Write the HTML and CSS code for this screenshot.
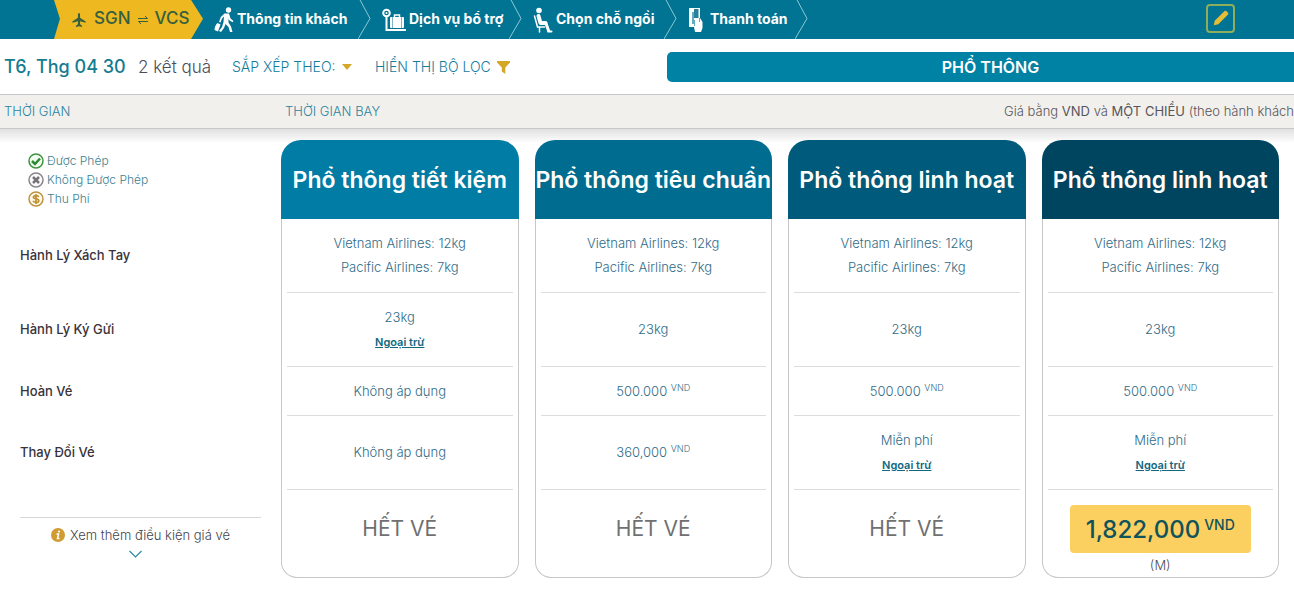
FILE: index.html
```html
<!DOCTYPE html>
<html lang="vi">
<head>
    <meta charset="UTF-8">
    <meta name="viewport" content="width=device-width, initial-scale=1.0">
    <title>SGN - VCS</title>
    <link rel="stylesheet" href="styles.css">
</head>
<body>
    <header class="topbar">
        <ol class="steps">
            <li class="step route">
                <svg width="16" height="16" viewBox="0 0 18 18"><path fill="currentColor" d="M9 1c.8 0 1.200 1 1.200 2v3.600l6.300 4v1.600l-6.300-1.800v3.400l2.300 1.600V17L9 16.100 5.500 17v-1.600l2.300-1.600v-3.400l-6.300 1.800v-1.600l6.300-4V3c0-1 .4-2 1.200-2z"/></svg>
                <span>SGN</span>
                <svg width="10" height="10" viewBox="0 0 10 10"><path fill="none" stroke="currentColor" d="M0 3.500h9.500L7 1M10 6.500H.5L3 9"/></svg>
                <span>VCS</span>
            </li>
            <li class="step">
                <svg width="20" height="26" viewBox="0 0 20 26"><circle cx="14.500" cy="3" r="2.700" fill="#fff"/><path fill="#fff" d="M10.500 6.500h4.500l1.500 5 3 2.500-1 1.300-3.500-2.300-.5-1.500v4l2.500 4 1.500 5.500h-2.500L14.500 20l-3-3-1.500 4-3 4-2-1 3-4 1.500-5 .5-5.500-2 2-1.500 4-1.500-.5L6.800 10z"/><path fill="#fff" d="M3.500 16l3 1.500-2.500 7-3.500-1.500c0-3 1-5 3-7z"/></svg>
                <span>Thông tin khách</span>
                <svg class="arrow" width="13" height="39" viewBox="0 0 13 39"><path d="M1-2l11 20.500L0 39"/></svg>
            </li>
            <li class="step">
                <svg width="24" height="24" viewBox="0 0 24 24"><g fill="none" stroke="#fff"><circle cx="4.500" cy="5" r="3.300" stroke-width="2"/><path stroke-width="2" d="M4.500 8v14H24"/><path stroke-width="1.500" d="M12.500 9V7h5v2"/></g><rect x="8" y="9" width="14" height="11" rx="1" fill="#fff"/><path stroke="#7fb4c6" d="M10.500 9v11M19.500 9v11"/><circle cx="4.500" cy="5" r="1" fill="#fff"/></svg>
                <span>Dịch vụ bổ trợ</span>
                <svg class="arrow" width="13" height="39" viewBox="0 0 13 39"><path d="M1-2l11 20.500L0 39"/></svg>
            </li>
            <li class="step">
                <svg width="20" height="26" viewBox="0 0 20 26"><circle cx="6" cy="3.500" r="2.800" fill="#fff"/><g fill="none" stroke="#fff" stroke-linecap="round" stroke-linejoin="round"><path stroke-width="4" d="M5.500 9l2 7h5"/><path stroke-width="3" d="M13 16.500l2.500 7"/><path stroke-width="2" d="M15 24.500h3.500"/><path stroke-width="1.500" d="M1.500 9l3 11h7M6.500 20v5"/></g></svg>
                <span>Chọn chỗ ngồi</span>
                <svg class="arrow" width="13" height="39" viewBox="0 0 13 39"><path d="M1-2l11 20.500L0 39"/></svg>
            </li>
            <li class="step pay">
                <svg width="16" height="26" viewBox="0 0 16 26"><path fill="#fff" d="M1 1h11v10l2.500 4v6l-1.500 4H7l-1-5H1z"/><path fill="#65aac0" d="M4 5h2v12H4z"/><path fill="#287f9b" d="M6 2h4.500v9H6z"/><path fill="none" stroke="#65aac0" d="M6.500 13v6M11.500 11v4"/></svg>
                <span>Thanh toán</span>
                <svg class="arrow" width="13" height="39" viewBox="0 0 13 39"><path d="M1-2l11 20.500L0 39"/></svg>
            </li>
        </ol>
        <button type="button" class="edit" aria-label="Edit">
            <svg width="18" height="18" viewBox="0 0 20 20"><path fill="#e6bd36" d="M2 18l1-5L14 2.200c.5-.5 1.200-.5 1.700 0l2.100 2.100c.5.5.5 1.200 0 1.700L7 17z"/></svg>
        </button>
    </header>

    <section class="toolbar">
        <h1 class="date">T6, Thg 04 30</h1>
        <span class="count">2 kết quả</span>
        <button type="button" class="tool sort">SẮP XẾP THEO:
            <svg width="10" height="6" viewBox="0 0 10 6"><path fill="#d5a729" d="M0 0h10L5 6z"/></svg>
        </button>
        <button type="button" class="tool">HIỂN THỊ BỘ LỌC
            <svg width="13" height="14" viewBox="0 0 13 14"><path fill="#d5a729" d="M0 1h13v1.500L8.300 7.500V14L4.800 11.500v-4L0 2.500z"/></svg>
        </button>
        <button type="button" class="cabin">PHỔ THÔNG</button>
    </section>

    <section class="columns">
        <span class="time">THỜI GIAN</span>
        <span>THỜI GIAN BAY</span>
        <span class="note">Giá bằng <b>VND</b> và <b>MỘT CHIỀU</b> (theo hành khách</span>
    </section>

    <main>
        <table class="fares">
            <thead>
                <tr>
                    <td class="legend">
                        <ul>
                            <li><svg width="16" height="16" viewBox="0 0 16 16"><circle cx="8" cy="8" r="7" fill="#f1fbf0" stroke="#3d9440" stroke-width="1.500"/><path fill="none" stroke="#2c8a31" stroke-width="2.500" d="M4 8l3 3 5-5.500"/></svg>Được Phép</li>
                            <li><svg width="16" height="16" viewBox="0 0 16 16"><circle cx="8" cy="8" r="7" fill="#fafafa" stroke="#8a868c" stroke-width="1.500"/><path stroke="#77737a" stroke-width="2.500" d="M5 5l6 6M11 5l-6 6"/></svg>Không Được Phép</li>
                            <li><svg width="16" height="16" viewBox="0 0 16 16"><circle cx="8" cy="8" r="7" fill="#fffaf0" stroke="#bd9340" stroke-width="1.500"/><path fill="none" stroke="#c1922f" stroke-width="1.700" d="M10.800 6c-.4-1-1.500-1.400-2.800-1.400-1.600 0-2.600.6-2.600 1.700C5.400 8.800 10.800 7 10.800 9.700c0 1.100-1.100 1.700-2.800 1.700-1.500 0-2.600-.5-3-1.600M8 3v10"/></svg>Thu Phí</li>
                        </ul>
                    </td>
                    <th scope="col" class="saver">Phổ thông tiết kiệm</th>
                    <th scope="col" class="standard">Phổ thông tiêu chuẩn</th>
                    <th scope="col" class="flex">Phổ thông linh hoạt</th>
                    <th scope="col" class="full">Phổ thông linh hoạt</th>
                </tr>
            </thead>
            <tbody>
                <tr class="tall">
                    <th scope="row">Hành Lý Xách Tay</th>
                    <td>Vietnam Airlines: 12kg<br>Pacific Airlines: 7kg</td>
                    <td>Vietnam Airlines: 12kg<br>Pacific Airlines: 7kg</td>
                    <td>Vietnam Airlines: 12kg<br>Pacific Airlines: 7kg</td>
                    <td>Vietnam Airlines: 12kg<br>Pacific Airlines: 7kg</td>
                </tr>
                <tr class="tall">
                    <th scope="row">Hành Lý Ký Gửi</th>
                    <td>23kg<br><a href="#">Ngoại trừ</a></td>
                    <td>23kg</td>
                    <td>23kg</td>
                    <td>23kg</td>
                </tr>
                <tr class="short">
                    <th scope="row">Hoàn Vé</th>
                    <td>Không áp dụng</td>
                    <td>500.000 <sup>VND</sup></td>
                    <td>500.000 <sup>VND</sup></td>
                    <td>500.000 <sup>VND</sup></td>
                </tr>
                <tr class="tall">
                    <th scope="row">Thay Đổi Vé</th>
                    <td>Không áp dụng</td>
                    <td>360,000 <sup>VND</sup></td>
                    <td>Miễn phí<br><a href="#">Ngoại trừ</a></td>
                    <td>Miễn phí<br><a href="#">Ngoại trừ</a></td>
                </tr>
            </tbody>
            <tfoot>
                <tr>
                    <td class="more">
                        <button type="button">
                            <span class="more-text"><svg width="14" height="14" viewBox="0 0 14 14"><circle cx="7" cy="7" r="7" fill="#d09c32"/><circle cx="8" cy="3.500" r="1.100" fill="#fff"/><path fill="none" stroke="#fff" stroke-width="1.500" d="M5.500 6h2l-1 4.500h2"/></svg>Xem thêm điều kiện giá vé</span>
                            <svg width="13" height="8" viewBox="0 0 13 8"><path fill="none" stroke="#2a8aa3" stroke-width="1.200" d="M.5 1l6 6 6-6"/></svg>
                        </button>
                    </td>
                    <td class="sold-out">HẾT VÉ</td>
                    <td class="sold-out">HẾT VÉ</td>
                    <td class="sold-out">HẾT VÉ</td>
                    <td>
                        <button type="button" class="price">1,822,000<span>VND</span></button>
                        <div class="class-code">(M)</div>
                    </td>
                </tr>
            </tfoot>
        </table>
    </main>
</body>
</html>
```
FILE: styles.css
```css
* {
    box-sizing: border-box;
}
body {
    margin: 0;
    font-family: Inter, "Noto Sans", sans-serif;
    font-size: 13px;
    color: #4c4c54;
    background-color: #fff;
    overflow-x: hidden;
}
button {
    font-family: inherit;
    padding: 0;
    border: none;
    background: none;
    cursor: pointer;
}
ul,
ol {
    list-style: none;
    margin: 0;
    padding: 0;
}

/* booking steps */
.topbar {
    display: flex;
    align-items: center;
    justify-content: space-between;
    height: 39px;
    padding: 0 59px 0 54px;
    background-color: #007492;
}
.steps {
    display: grid;
    grid-template-columns: 149px 168px 151px 155px 131px;
}
.step {
    display: flex;
    align-items: center;
    gap: 3px;
    height: 39px;
    padding-left: 11px;
    color: #fff;
    font-size: 14px;
    font-weight: 700;
    white-space: nowrap;
}
.step svg {
    flex: none;
}
.step span {
    padding-bottom: 3px;
}
.route {
    gap: 7px;
    padding-left: 17px;
    background-color: #edb820;
    color: #35603f;
    font-size: 17px;
    font-weight: 500;
    clip-path: polygon(0 0, 92% 0, 100% 48%, 92% 100%, 0 100%, 4% 48%);
}
.pay {
    gap: 6px;
}
.step .arrow {
    margin-left: auto;
}
.arrow path {
    fill: none;
    stroke: #8fc6d5;
}
.edit {
    display: flex;
    align-items: center;
    justify-content: center;
    width: 29px;
    height: 29px;
    margin-bottom: 3px;
    border: 2px solid #8fad5b;
    border-radius: 4px;
}

/* date and filters */
.toolbar {
    display: flex;
    align-items: center;
    height: 55px;
    white-space: nowrap;
}
.date {
    width: 138px;
    margin: 0;
    padding-left: 4px;
    color: #147c91;
    font-size: 18px;
    font-weight: 500;
}
.count {
    width: 94px;
    font-size: 17px;
    font-weight: 300;
}
.tool {
    display: flex;
    align-items: center;
    gap: 6px;
    color: #147c9c;
    font-size: 14px;
    font-weight: 300;
}
.sort {
    width: 143px;
}
.cabin {
    width: 50%;
    height: 30px;
    margin-left: auto;
    margin-right: -20px;
    border-radius: 5px;
    background-color: #0082a4;
    color: #fff;
    font-size: 16px;
    font-weight: 600;
}

.columns {
    display: flex;
    align-items: center;
    height: 35px;
    padding: 0 0 2px 4px;
    border-top: 1px solid #c8c8c8;
    border-bottom: 1px solid #c8c8c8;
    background-color: #f2f0ed;
    color: #2a84a0;
    font-weight: 300;
    white-space: nowrap;
}
.time {
    width: 281px;
}
.note {
    margin-left: auto;
    color: #55555a;
}
.note b {
    font-weight: 400;
}

/* fare comparison */
main {
    margin-right: -1px;
    padding: 11px 0;
    background: linear-gradient(#e0e0e0, #fff 14px);
}
.fares {
    width: 100%;
    table-layout: fixed;
    border-spacing: 16px 0;
    text-align: center;
}
.fares th,
.fares td {
    padding: 0;
}
.legend {
    width: 249px;
    color: #3c7f8f;
    font-size: 12px;
    font-weight: 300;
    text-align: left;
    vertical-align: top;
}
.legend ul {
    padding: 11px 0 0 12px;
}
.legend li {
    display: flex;
    align-items: center;
    gap: 3px;
    height: 19px;
}
.fares thead th {
    height: 79px;
    border-radius: 20px 20px 0 0;
    color: #fff;
    font-size: 23px;
    font-weight: 600;
    white-space: nowrap;
}
.fares .saver {
    background-color: #007ca5;
}
.fares .standard {
    background-color: #006d90;
}
.fares .flex {
    background-color: #005a7c;
}
.fares .full {
    background-color: #004560;
}
.tall {
    height: 74px;
}
.short {
    height: 49px;
}
.fares tbody th,
.fares tbody td {
    padding-bottom: 2px;
}
.fares tbody th {
    padding-left: 4px;
    color: #38323a;
    font-weight: 500;
    text-align: left;
}
.fares tbody td {
    border: solid #c6c6cb;
    border-width: 0 1px;
    background: linear-gradient(#ddd, #ddd) bottom / calc(100% - 10px) 1px no-repeat #fff;
    color: #2f6b87;
    font-weight: 300;
    line-height: 24px;
}
.fares a {
    color: #11687f;
    font-size: 11px;
    font-weight: 600;
}
.fares sup {
    font-size: 9px;
    line-height: 0;
}
.fares tfoot td {
    height: 88px;
    padding-top: 15px;
    border: 1px solid #c6c6cb;
    border-top: none;
    border-radius: 0 0 16px 16px;
    vertical-align: top;
}
.fares .sold-out {
    color: #707070;
    font-size: 21px;
    line-height: 48px;
}
.price {
    display: flex;
    align-items: center;
    justify-content: center;
    gap: 4px;
    width: 181px;
    height: 48px;
    margin: 0 auto;
    border-radius: 4px;
    background-color: #fbcf60;
    color: #10535b;
    font-size: 24px;
    font-weight: 500;
}
.price span {
    padding-bottom: 9px;
    font-size: 14px;
}
.class-code {
    font-weight: 300;
    line-height: 24px;
}
.fares tfoot .more {
    padding: 27px 4px 0;
    border: none;
}
.more button {
    display: flex;
    flex-direction: column;
    align-items: center;
    gap: 3px;
    width: 100%;
    padding-top: 5px;
    border-top: 1px solid #d8d8d8;
    color: #44444c;
    font-size: 13px;
    font-weight: 300;
}
.more-text {
    display: flex;
    align-items: center;
    gap: 5px;
    height: 24px;
}
.more button > svg {
    margin-right: 10px;
}
```
